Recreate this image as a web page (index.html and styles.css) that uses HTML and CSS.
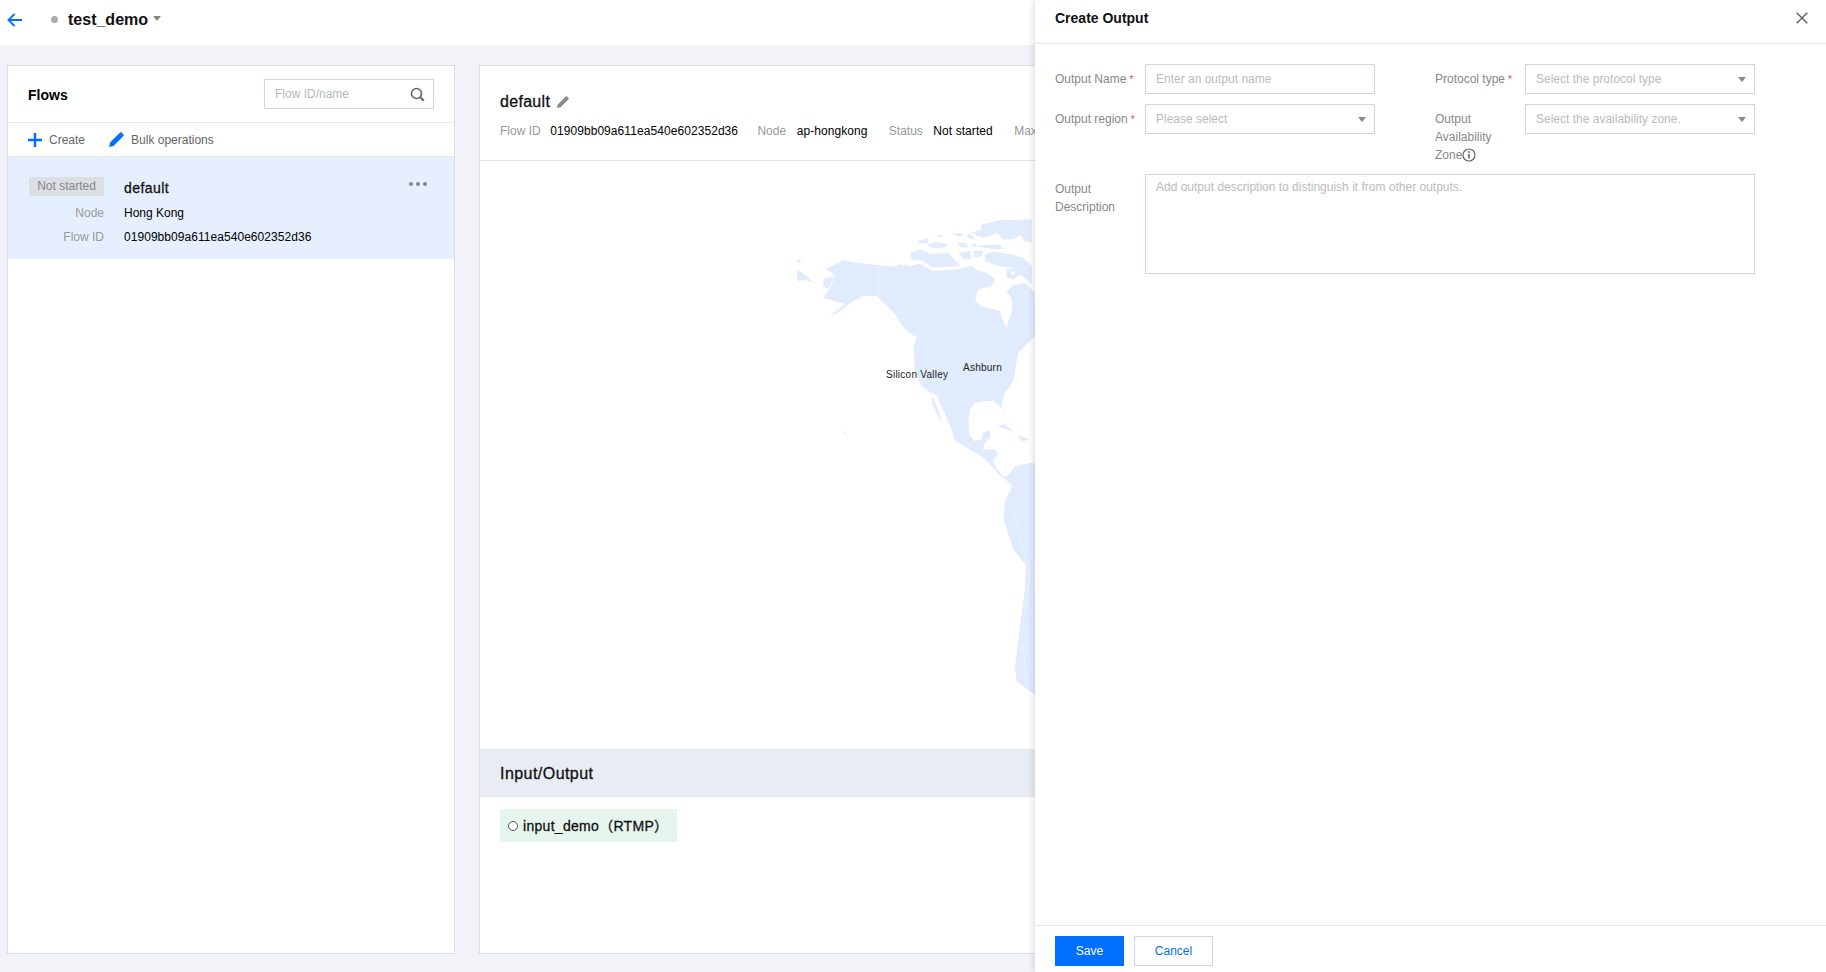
FILE: index.html
```html
<!DOCTYPE html>
<html lang="en">
<head>
    <meta charset="UTF-8">
    <meta name="viewport" content="width=device-width, initial-scale=1.0">
    <title>Create Output</title>
    <link rel="stylesheet" href="styles.css">
</head>
<body>
    <!-- Top bar -->
    <div class="topbar">
        <svg class="backArrow" width="15" height="14" viewBox="0 0 15 14"><path d="M7.5 1 1.5 7l6 6M1.5 7H15" fill="none" stroke="#006eff" stroke-width="1.8"/></svg>
        <span class="statusDot"></span>
        <span class="appName">test_demo</span>
        <span class="caret"></span>
    </div>

    <div class="content">
        <!-- Flows list -->
        <div class="flowsCard">
            <div class="flowsHeader">
                <h3>Flows</h3>
                <div class="searchBox">
                    <span>Flow ID/name</span>
                    <svg width="15" height="15" viewBox="0 0 15 15"><circle cx="6.5" cy="6.5" r="5" fill="none" stroke="#666" stroke-width="1.6"/><path d="m10.2 10.2 3.6 3.6" stroke="#666" stroke-width="2"/></svg>
                </div>
            </div>
            <div class="toolbar">
                <button class="toolBtn">
                    <svg width="14" height="14" viewBox="0 0 14 14"><path d="M7 0v14M0 7h14" stroke="#006eff" stroke-width="2.4"/></svg>
                    Create
                </button>
                <button class="toolBtn">
                    <svg width="15" height="15" viewBox="0 0 14 14"><path d="M0 14 1 9.8 9.6 1.2l3.2 3.2L4.2 13ZM10.6.3l.6-.3 2.8 2.8-.3.6-.9.9-3.1-3.1Z" fill="#006eff"/></svg>
                    Bulk operations
                </button>
            </div>
            <div class="flowRow">
                <div class="flowGrid">
                    <span class="tag">Not started</span><span class="flowName medium">default</span>
                    <span class="flowLabel">Node</span><span>Hong Kong</span>
                    <span class="flowLabel">Flow ID</span><span class="idValue">01909bb09a611ea540e602352d36</span>
                </div>
                <div class="dots"><i></i><i></i><i></i></div>
            </div>
        </div>

        <!-- Flow detail -->
        <div class="detailCard">
            <div class="detailHead">
                <div class="detailTitle">
                    <span class="medium">default</span>
                    <svg width="12" height="12" viewBox="0 0 14 14"><path d="M0 14 1 9.8 9.6 1.2l3.2 3.2L4.2 13ZM10.6.3l.6-.3 2.8 2.8-.3.6-.9.9-3.1-3.1Z" fill="#888"/></svg>
                </div>
                <div class="detailMeta">
                    <span class="metaLabel">Flow ID</span><span class="metaValue metaId">01909bb09a611ea540e602352d36</span>
                    <span class="metaLabel">Node</span><span class="metaValue">ap-hongkong</span>
                    <span class="metaLabel">Status</span><span class="metaValue">Not started</span>
                    <span class="metaLabel">Max</span>
                </div>
            </div>

            <div class="map">
                <svg class="mapShape" width="255" height="520" viewBox="0 0 765 1560">
                    <g fill="#e0ebfd">
                        <!-- alaska tips -->
                        <path d="M52 175 66 180 52 190ZM52 205 75 222 100 245 72 236 52 240ZM130 232 165 228 145 262 130 258Z"/>
                        <!-- mainland -->
                        <path d="M135 205 190 178 230 185 295 193 340 197 360 190 390 195 420 188 460 210 530 205 575 195 595 210 620 215 645 235 635 255 595 265 585 295 600 315 660 330 665 350 680 380 685 360 695 335 695 295 680 270 695 255 735 245 765 275V405L745 425 715 455 705 510 700 540 675 575 665 605 670 640 680 660 665 620 640 600 620 600 585 605 570 625 565 660 570 705 585 720 605 715 610 695 630 688 630 710 615 725 610 745 640 745 655 755 640 780 650 805 675 830 690 815 705 795 755 785 765 790V1480L755 1475 710 1440 705 1400 715 1320 735 1160 738 1095 700 1045 670 955 675 900 695 860 693 850 675 835 660 825 640 800 610 770 570 745 525 720 515 685 495 640 470 585 445 570 425 555 405 510 400 440 410 410 375 385 345 340 290 285 250 285 220 300 190 325 145 350 195 308 130 292 150 262 165 228 155 215Z"/>
                        <!-- arctic islands -->
                        <path d="M605 70 660 58 755 55V95L715 105 700 115 670 115 650 95 630 105 605 110 575 95 605 85Z"/>
                        <path d="M720 100 755 95V125L735 120ZM470 102 490 102 480 110ZM515 95 550 98 540 108ZM410 120 445 112 445 125 420 128ZM440 130 470 123 505 130 490 142 455 140ZM530 125 560 125 565 138 545 140ZM560 100 575 100 585 115 570 115ZM570 130 590 130 585 140Z"/>
                        <path d="M585 135 660 130 670 145 620 142ZM390 155 420 145 450 155 435 165 430 180 395 175ZM435 160 505 155 540 195 460 200 445 190 430 185ZM535 155 570 150 575 175 550 175ZM580 150 610 148 605 165 585 170ZM615 160 640 152 690 160 730 170 755 195V250L725 225 695 200 655 195 615 180Z"/>
                        <path d="M680 205 710 200 720 220 700 235 680 230Z"/>
                        <!-- baja, caribbean, hawaii -->
                        <path d="M457 585 470 615 490 670 480 655 455 610ZM650 675 675 670 705 695 680 685ZM715 705 750 715 725 722ZM685 720 700 722 690 724ZM180 684 196 696 208 716 198 702Z"/>
                    </g>
                    <circle cx="699" cy="216" r="6" fill="#fff"/>
                    <path d="M295 193V285M410 405H585L660 440 660 478M445 575 510 590 556 642M610 745 650 750M690 900 700 915 720 1020 745 1090 745 1160 725 1300 740 1440" fill="none" stroke="#eef4fe" stroke-width="2"/>
                </svg>
                <span class="mapLabel siliconValley">Silicon Valley</span>
                <span class="mapLabel ashburn">Ashburn</span>
            </div>

            <div class="ioBand medium">Input/Output</div>
            <div class="ioBody">
                <div class="ioChip">
                    <span class="ioCircle"></span>
                    <span class="medium">input_demo（RTMP）</span>
                </div>
            </div>
        </div>
    </div>

    <!-- Create Output drawer -->
    <div class="drawer">
        <div class="drawerHeader">
            <h3>Create Output</h3>
            <svg width="12" height="12" viewBox="0 0 12 12"><path d="m.7.7 10.6 10.6M11.3.7.7 11.3" stroke="#666" stroke-width="1.5"/></svg>
        </div>
        <form class="drawerBody">
            <div class="formRow">
                <div class="field">
                    <label>Output Name<em>*</em></label>
                    <div class="control">Enter an output name</div>
                </div>
                <div class="field">
                    <label>Protocol type<em>*</em></label>
                    <div class="control select">Select the protocol type</div>
                </div>
            </div>
            <div class="formRow">
                <div class="field">
                    <label>Output region<em>*</em></label>
                    <div class="control select">Please select</div>
                </div>
                <div class="field">
                    <label class="narrow">Output Availability Zone<svg class="infoIcon" width="14" height="14" viewBox="0 0 14 14"><circle cx="7" cy="7" r="6" fill="none" stroke="#666" stroke-width="1.2"/><path d="M7 6v4.6" stroke="#666" stroke-width="1.6"/><circle cx="7" cy="3.9" r="1" fill="#666"/></svg></label>
                    <div class="control select">Select the availability zone.</div>
                </div>
            </div>
            <div class="field fieldWide">
                <label class="narrow">Output Description</label>
                <div class="control textArea">Add output description to distinguish it from other outputs.</div>
            </div>
        </form>
        <div class="drawerFooter">
            <button class="btnPrimary">Save</button>
            <button class="btnDefault">Cancel</button>
        </div>
    </div>
</body>
</html>
```

FILE: styles.css
```css
* {
    box-sizing: border-box;
}
body {
    font-family: "Liberation Sans", Arial, "Noto Sans CJK SC", sans-serif;
    font-size: 12px;
    line-height: 18px;
    color: #000;
    background-color: #f2f3f8;
    margin: 0;
    height: 100vh;
    overflow: hidden;
    display: flex;
    flex-direction: column;
}
h3 {
    margin: 0;
    font-size: 14px;
}
button {
    font: inherit;
    cursor: pointer;
}
.medium {
    -webkit-text-stroke: 0.3px;
}

/* top bar */
.topbar {
    height: 45px;
    flex: none;
    background: #fff;
    display: flex;
    align-items: center;
    padding: 0 0 6px 7px;
}
.backArrow {
    margin-right: 29px;
}
.statusDot {
    width: 7px;
    height: 7px;
    border-radius: 50%;
    background: #aaa;
    margin-right: 10px;
}
.appName {
    font-size: 16px;
    font-weight: bold;
    color: #111;
}
.caret {
    margin: -3px 0 0 5px;
    border: 4px solid transparent;
    border-top: 5px solid #888;
    border-bottom: 0;
}

/* columns */
.content {
    flex: 1;
    min-height: 0;
    display: flex;
    gap: 24px;
    padding: 20px 20px 18px 7px;
}
.flowsCard {
    width: 448px;
    flex: none;
    background: #fff;
    border: 1px solid #dcdfe5;
}
.flowsHeader {
    height: 57px;
    border-bottom: 1px solid #e5e7ec;
    display: flex;
    justify-content: space-between;
    align-items: center;
    padding: 0 20px;
}
.flowsHeader h3 {
    margin-top: 2px;
}
.searchBox {
    width: 170px;
    height: 30px;
    border: 1px solid #cfd5de;
    color: #b5b8bd;
    display: flex;
    justify-content: space-between;
    align-items: center;
    padding: 0 8px 0 10px;
}
.toolbar {
    height: 34px;
    border-bottom: 1px solid #e5e7ec;
    display: flex;
    align-items: center;
    gap: 24px;
    padding: 0 20px;
}
.toolBtn {
    border: none;
    background: none;
    padding: 0;
    color: #666;
    display: flex;
    align-items: center;
    gap: 7px;
}
.flowRow {
    height: 102px;
    background: #e5effd;
    display: flex;
    justify-content: space-between;
    padding: 20px 27px 0 21px;
}
.flowGrid {
    display: grid;
    grid-template-columns: 75px 1fr;
    column-gap: 20px;
    row-gap: 6px;
    align-content: start;
    align-items: center;
}
.tag {
    align-self: start;
    background: #dcdfe3;
    color: #888;
    text-align: center;
    line-height: 19px;
}
.flowName {
    font-size: 14px;
    letter-spacing: 0.45px;
    color: #111;
    padding: 2px 0 1px;
}
.flowLabel {
    color: #999;
    text-align: right;
}
.idValue {
    letter-spacing: 0.05px;
}
.dots {
    display: flex;
    gap: 3px;
    margin-top: 5px;
}
.dots i {
    width: 4px;
    height: 4px;
    border-radius: 50%;
    background: #888;
}

/* detail */
.detailCard {
    flex: 1;
    min-width: 0;
    background: #fff;
    border: 1px solid #dcdfe5;
    display: flex;
    flex-direction: column;
}
.detailHead {
    height: 95px;
    flex: none;
    border-bottom: 1px solid #e0e3e8;
    padding: 25px 20px 0;
}
.detailTitle {
    font-size: 16px;
    line-height: 22px;
    letter-spacing: 0.3px;
    color: #111;
    display: flex;
    align-items: center;
    gap: 7px;
}
.detailMeta {
    margin-top: 9px;
    white-space: nowrap;
}
.metaLabel {
    color: #999;
    margin-right: 10.5px;
}
.metaLabel:first-child {
    margin-right: 9.5px;
}
.metaValue {
    letter-spacing: 0.07px;
    margin-right: 18px;
}
.metaId {
    margin-right: 16px;
}
.map {
    flex: 1;
    position: relative;
}
.mapShape {
    position: absolute;
    left: 300px;
    top: 40px;
}
.mapLabel {
    position: absolute;
    font-size: 10px;
    line-height: 12px;
    letter-spacing: 0.25px;
    color: #222;
}
.siliconValley {
    left: 406px;
    top: 208px;
}
.ashburn {
    left: 483px;
    top: 201px;
}
.ioBand {
    height: 48px;
    flex: none;
    background: #e8ecf3;
    font-size: 16px;
    letter-spacing: 0.45px;
    color: #111;
    display: flex;
    align-items: center;
    padding: 1px 0 0 20px;
}
.ioBody {
    height: 156px;
    flex: none;
    padding: 12px 20px;
}
.ioChip {
    width: 177px;
    height: 33px;
    background: #e6f6ee;
    font-size: 14px;
    letter-spacing: 0.3px;
    color: #111;
    display: flex;
    align-items: center;
    gap: 5px;
    padding-left: 8px;
}
.ioCircle {
    width: 10px;
    height: 10px;
    border: 1px solid #555;
    border-radius: 50%;
    background: #fff;
}

/* drawer */
.drawer {
    position: absolute;
    top: 0;
    right: 0;
    bottom: 0;
    width: 791px;
    background: #fff;
    box-shadow: -2px 0 6px rgba(0, 0, 0, 0.12);
    display: flex;
    flex-direction: column;
}
.drawerHeader {
    height: 44px;
    flex: none;
    border-bottom: 1px solid #e5e7ec;
    display: flex;
    justify-content: space-between;
    align-items: center;
    padding: 0 18px 8px 20px;
}
.drawerHeader h3 {
    color: #111;
}
.drawerBody {
    flex: 1;
    padding: 20px 20px 0;
    display: flex;
    flex-direction: column;
    gap: 10px;
}
.formRow {
    display: flex;
    gap: 60px;
}
.field {
    display: flex;
    width: 320px;
}
.fieldWide {
    width: 700px;
}
label {
    width: 90px;
    flex: none;
    padding-top: 6px;
    color: #888;
}
label em {
    color: #e54545;
    font-style: normal;
    font-size: 10px;
    margin-left: 3px;
}
label.narrow {
    padding-right: 14px;
}
.infoIcon {
    vertical-align: -3px;
}
.control {
    flex: 1;
    height: 30px;
    border: 1px solid #cfd5de;
    color: #bbb;
    line-height: 28px;
    padding: 0 10px;
    position: relative;
}
.select::after {
    content: "";
    position: absolute;
    right: 8px;
    top: 12px;
    border: 4px solid transparent;
    border-top: 5px solid #888;
    border-bottom: 0;
}
.textArea {
    height: 100px;
    line-height: 18px;
    padding-top: 3px;
}
.drawerFooter {
    height: 47px;
    flex: none;
    border-top: 1px solid #e5e7ec;
    display: flex;
    gap: 10px;
    padding: 10px 20px 0;
}
.btnPrimary, .btnDefault {
    height: 30px;
    border: 1px solid #006eff;
    background: #006eff;
    color: #fff;
    padding: 0;
    width: 69px;
}
.btnDefault {
    width: 79px;
    background: #fff;
    border-color: #cfd5de;
    color: #006eff;
}
```
